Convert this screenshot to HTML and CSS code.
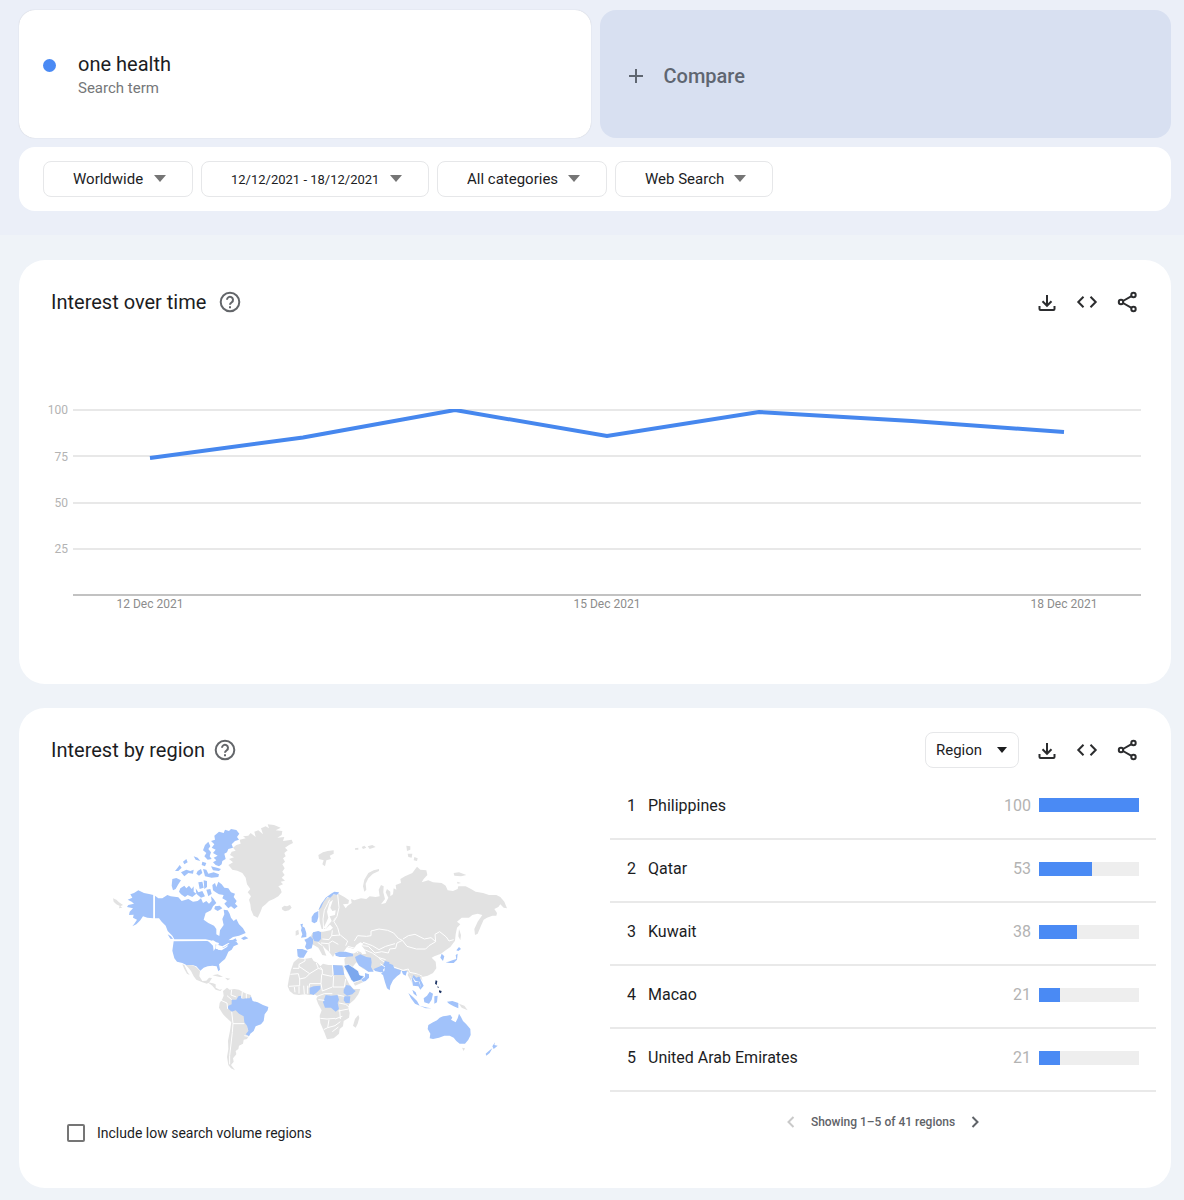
FILE: index.html
```html
<!DOCTYPE html>
<html lang="en">
<head>
<meta charset="utf-8">
<meta name="viewport" content="width=device-width, initial-scale=1">
<title>one health - Explore</title>
<link rel="stylesheet" href="styles.css">
</head>
<body>
<svg class="sprite" aria-hidden="true">
  <symbol id="i-help" viewBox="0 0 24 24"><circle cx="12" cy="12" r="9.300"/><path d="M9 9.800a3 3 0 1 1 4.800 2.400c-1.100.800-1.800 1.300-1.800 2.500"/><path d="M12 16.200v2"/></symbol>
  <symbol id="i-download" viewBox="0 0 24 24"><path d="M12 5v10.500M7.500 11.300 12 15.800l4.500-4.500M4.500 16v3a1 1 0 0 0 1 1h13a1 1 0 0 0 1-1v-3"/></symbol>
  <symbol id="i-code" viewBox="0 0 24 24"><path d="M8.500 6.800 3.300 12l5.200 5.200M15.500 6.800l5.200 5.200-5.200 5.200"/></symbol>
  <symbol id="i-share" viewBox="0 0 24 24"><circle cx="6" cy="12" r="2.200"/><circle cx="18.500" cy="5" r="2.200"/><circle cx="18.500" cy="19" r="2.200"/><path d="m8 11 8.500-4.900M8 13l8.500 4.900"/></symbol>
</svg>

<header class="top">
  <div class="terms">
    <section class="term">
      <span class="dot"></span>
      <div>
        <h1 class="term-name">one health</h1>
        <p class="term-kind">Search term</p>
      </div>
    </section>
    <button class="compare" type="button">
      <svg class="plus" viewBox="0 0 16 16" aria-hidden="true"><path d="M8 1v14M1 8h14"/></svg>
      Compare
    </button>
  </div>
  <form class="filters">
    <div class="drop drop-place"><select aria-label="Location"><option>Worldwide</option></select></div>
    <div class="drop drop-dates"><select aria-label="Time range"><option>12/12/2021 - 18/12/2021</option></select></div>
    <div class="drop drop-category"><select aria-label="Category"><option>All categories</option></select></div>
    <div class="drop drop-source"><select aria-label="Search type"><option>Web Search</option></select></div>
  </form>
</header>

<main class="cards">
  <section class="card">
    <div class="card-head">
      <h2 class="card-title">Interest over time</h2>
      <button class="help" type="button" aria-label="Help"><svg class="icon"><use href="#i-help"/></svg></button>
      <div class="actions">
        <button class="action" type="button" aria-label="Download"><svg class="icon"><use href="#i-download"/></svg></button>
        <button class="action" type="button" aria-label="Embed"><svg class="icon"><use href="#i-code"/></svg></button>
        <button class="action" type="button" aria-label="Share"><svg class="icon"><use href="#i-share"/></svg></button>
      </div>
    </div>
    <div class="chart">
      <svg viewBox="0 0 1094 220" role="img" aria-label="Interest over time, 12 to 18 December 2021">
        <clipPath id="plot"><path d="M25 9h1069v186H25z"/></clipPath>
        <path class="grid" d="M25 10h1068M25 56h1068M25 103h1068M25 149h1068"/>
        <path class="base" d="M25 195h1068"/>
        <g class="y-labels"><text x="20" y="14">100</text><text x="20" y="61">75</text><text x="20" y="107">50</text><text x="20" y="153">25</text></g>
        <g class="x-labels"><text x="102" y="208">12 Dec 2021</text><text x="559" y="208">15 Dec 2021</text><text x="1016" y="208">18 Dec 2021</text></g>
        <path class="line" clip-path="url(#plot)" d="M102 58 255 37.500 407 10 559 36 711 12 864 21 1016 32"/>
      </svg>
    </div>
  </section>

  <section class="card">
    <div class="card-head">
      <h2 class="card-title">Interest by region</h2>
      <button class="help help-near" type="button" aria-label="Help"><svg class="icon"><use href="#i-help"/></svg></button>
      <div class="actions">
        <div class="drop drop-region"><select aria-label="Resolution"><option>Region</option></select></div>
        <button class="action" type="button" aria-label="Download"><svg class="icon"><use href="#i-download"/></svg></button>
        <button class="action" type="button" aria-label="Embed"><svg class="icon"><use href="#i-code"/></svg></button>
        <button class="action" type="button" aria-label="Share"><svg class="icon"><use href="#i-share"/></svg></button>
      </div>
    </div>
    <div class="region-body">
      <div class="map-side">
        <svg class="map" viewBox="0 0 1260 810" role="img" aria-label="World map of interest by region">
          <!-- Greenland, Iceland, Aleutians -->
          <g class="land">
            <path d="M390 150 405 145 393 138 398 128 410 125 402 116 412 108 425 104 422 92 440 88 432 82 448 80 455 72 470 84 466 68 478 64 492 76 486 58 500 52 510 58 506 46 525 48 545 56 530 64 550 66 548 78 535 86 556 84 552 96 568 94 578 92 582 102 570 108 558 116 566 124 556 132 560 142 552 148 558 158 550 166 557 178 550 188 557 198 548 206 558 215 545 218 552 226 538 232 545 240 548 250 538 262 524 270 510 276 500 286 490 294 484 310 476 326 464 320 456 302 454 286 450 272 456 262 446 250 454 240 444 226 440 206 430 192 415 185 400 182 388 168 402 160Z"/>
            <path d="M548 296 556 290 564 292 573 288 578 296 570 304 558 307 550 302Z"/>
            <path d="M42 268 52 272 60 280 72 288 64 292 52 286 44 278Z M62 290 70 296 60 298Z"/>
          </g>
          <!-- North America -->
          <g class="hit">
            <path d="M163 258 150 255 135 252 118 244 105 252 94 256 100 266 86 272 98 278 105 284 88 288 84 294 102 298 92 308 90 318 104 317 102 326 114 332 106 344 100 352 112 346 124 334 132 322 145 326 163 328Z"/>
            <path d="M168 260 178 268 190 268 205 258 215 262 238 265 248 276 268 270 282 278 296 276 306 268 312 282 322 276 330 284 338 276 336 262 344 270 352 282 342 292 336 304 320 312 314 332 328 342 345 350 352 360 352 376 361 381 363 364 374 348 370 330 376 316 374 302 386 304 392 314 396 326 404 336 412 330 420 346 432 358 440 372 420 380 402 384 388 394 402 392 410 388 414 396 402 402 388 402 370 412 358 408 345 398 334 394 320 391 226 391 220 380 206 366 200 350 188 338 180 328 168 328Z"/>
            <path d="M220 210 232 207 246 214 238 226 230 240 222 244 218 230Z M244 238 256 230 262 238 270 230 278 240 284 232 284 248 292 254 280 264 266 258 258 264 246 256 240 248Z M346 80 360 68 374 72 378 62 390 66 396 60 412 63 421 74 414 84 420 92 408 96 398 106 402 116 388 120 384 130 376 134 380 150 370 156 368 166 360 172 350 168 342 160 352 154 344 146 356 140 342 132 350 122 338 116 346 106 336 96 348 92Z M318 108 328 98 334 112 328 120 336 130 332 142 338 150 326 152 316 142 322 132 312 124Z"/>
            <path d="M340 228 348 222 352 234 358 218 368 226 376 236 388 238 396 250 408 254 404 264 413 276 408 284 416 292 406 300 396 292 388 298 376 284 384 276 370 268 374 258 360 256 350 250 342 244Z M228 186 236 176 242 168 248 176 238 186Z M252 158 262 150 266 160 256 166Z M246 190 262 182 274 186 284 182 282 194 268 192 256 202Z M284 142 296 146 304 156 290 152Z M310 158 322 162 318 172 308 168Z M296 186 306 180 310 192 300 200 292 194Z M312 180 322 182 328 194 344 190 360 196 358 204 338 206 318 202Z M336 172 354 176 366 180 360 186 342 184Z M298 220 310 218 314 236 302 240Z M314 214 324 216 324 234 316 240Z M290 238 298 250 310 246 318 262 306 266 292 254Z M322 242 334 240 338 254 328 262Z M348 292 362 290 370 298 356 306 346 300Z M438 382 448 388 434 393 426 388Z M206 376 216 382 222 390 214 389Z"/>
            <g transform="translate(0 360)">
              <path d="M224 37 325 36 337 42 352 46 350 60 364 60 382 50 392 42 404 38 412 38 418 46 404 52 398 62 388 68 384 78 378 90 368 98 360 106 363 122 358 127 353 112 340 110 326 112 314 116 304 125 292 112 280 108 262 108 250 102 234 98 226 88 220 65Z"/>
            </g>
          </g>
          <g class="sea" transform="translate(0 360)">
            <path d="M330 38 342 34 352 40 360 42 358 48 350 46 350 56 344 66 342 50 336 44Z M356 50 364 58 374 56 388 48 384 54 368 64 356 62Z"/>
          </g>
          <!-- Latin America -->
          <g transform="translate(0 360)">
            <g class="land">
              <path d="M260 108 280 109 290 113 303 126 301 142 310 156 322 155 330 146 339 147 332 158 324 164 310 160 292 152 284 142 276 126 268 116Z M250 106 256 108 266 130 272 138 264 134 256 120Z M326 160 342 163 350 166 350 176 362 182 370 181 364 186 350 182 340 170Z M340 139 356 136 372 143 362 144Z M378 146 394 149 386 154Z"/>
              <path d="M372 186 384 176 392 182 406 180 420 182 430 188 442 194 456 198 456 210 448 240 446 300 452 316 444 330 434 332 432 344 420 350 418 360 410 366 412 376 402 388 404 398 396 408 408 424 396 418 388 408 384 384 388 360 387 335 393 305 397 280 384 268 372 256 360 236 362 222 370 210 374 200Z"/>
            </g>
            <path class="hit" d="M398 212 412 212 418 202 426 200 430 210 442 208 452 208 456 202 461 216 476 220 492 228 508 234 506 244 497 256 494 276 486 286 470 292 464 306 454 314 450 322 440 316 448 306 444 290 436 280 434 262 420 254 410 244 398 248 386 238 388 230 398 226Z"/>
            <path class="border" d="M384 200 398 212M366 214 384 222M384 222 386 240M398 248 402 284 436 284M402 284 400 310 396 345 392 380 392 406M398 182 396 198 412 204M430 188 428 208M442 194 442 208M436 320 448 322"/>
          </g>
          <!-- Europe and Asia -->
          <g transform="translate(540 60)">
            <path class="land" d="M120 240 132 218 146 206 160 198 178 194 196 204 210 214 208 224 192 226 200 238 206 230 218 222 216 210 226 214 246 208 262 210 272 202 290 204 302 202 299 182 306 168 314 172 313 190 318 210 306 226 320 222 328 206 320 190 324 180 334 188 334 202 342 196 344 178 352 182 350 168 366 162 364 150 378 142 400 132 414 113 424 122 442 124 445 138 434 150 428 160 448 154 462 160 488 162 500 170 506 184 522 186 536 180 538 172 560 172 576 180 590 188 612 192 630 198 652 198 664 204 676 218 684 238 674 236 664 226 658 234 646 240 654 252 652 260 640 260 624 266 614 272 606 290 596 314 588 318 586 300 596 278 610 258 596 254 580 258 570 266 548 266 534 278 544 286 534 296 530 316 528 335 514 354 500 364 486 374 476 378 466 382 458 386 470 398 472 418 462 432 446 440 430 444 420 450 412 460 400 452 388 430 376 424 350 430 322 405 290 422 270 428 250 418 232 400 216 420 198 410 196 390 206 378 228 372 236 366 246 370 250 376 262 374 256 360 248 350 254 344 244 340 232 348 224 360 204 354 194 368 170 370 162 384 150 368 138 358 130 348 142 380 130 378 118 356 100 346 92 330 100 312 116 308 132 308 154 304 162 296 152 286 166 272 172 262 150 290 140 300 128 300 122 278Z"/>
            <path class="sea" d="M144 248 152 220 162 212 154 236 160 246 170 244 168 258 152 262 158 276 148 288 140 300 134 296 142 280 148 266Z"/>
            <path class="land" d="M118 78 132 70 146 66 164 64 164 74 152 80 156 90 142 94 138 112 130 106 134 94 120 90Z M256 188 252 172 256 152 268 132 284 124 300 120 300 126 282 134 268 148 260 164 262 182Z M382 50 394 52 394 62 384 66Z M386 74 400 74 398 86 388 84Z M406 84 416 88 414 96 404 94Z M524 132 540 130 562 138 546 142 526 140Z M534 158 546 162 536 164Z M228 58 238 56 238 62 228 62Z M248 54 256 50 262 56 252 60Z M266 52 280 48 290 54 272 60Z M540 300 546 318 544 334 538 322Z M50 306 58 302 60 316 50 320Z"/>
            <path class="hit" d="M98 264 106 252 118 246 118 264 114 278 106 283 98 278Z M118 244 126 226 140 206 156 194 166 188 180 190 176 198 164 196 154 206 146 204 134 218 126 236Z M64 286 72 284 70 292 77 296 82 312 82 324 66 326 70 316 66 304 68 296Z M76 332 86 328 94 322 102 330 102 342 98 358 84 362 78 354 82 342Z M102 310 118 306 126 310 126 330 118 338 106 336 100 324Z M54 360 70 360 86 366 80 376 74 386 62 386 56 382Z"/>
            <path class="border" d="M134 304 132 270 136 244 146 224 152 212M176 196 180 236 174 262 166 276M130 330 150 332 158 320 160 304M158 320 184 318 206 336 200 350M126 342 148 344 160 336 178 346M150 344 152 368M164 276 176 296 182 318M116 340 130 350M226 336 236 320 262 322 276 320 276 306 300 300 326 304 344 312 358 328 370 334 354 342 350 358 332 360 328 372 308 368 288 372 268 352 250 350M252 340 280 350 300 362 320 352 348 344M256 362 280 372 300 386 320 392M372 330 388 320 408 316 436 330 456 326 470 338 450 350 440 360 412 360 384 352 370 334M470 338 468 316 482 308 502 324 510 336 524 332M300 388 322 404 344 414 372 424 388 420 392 430 412 434 430 442M206 352 228 358 236 372"/>
          </g>
          <g transform="translate(540 390)">
            <path class="hit" d="M168 42 182 38 200 38 222 44 222 52 200 54 182 54 170 50Z M228 54 244 46 262 54 276 56 278 70 276 84 284 98 268 98 254 88 240 80 232 66Z M284 90 298 84 312 78 318 66 332 70 322 82 312 92 314 100 304 100 288 96Z M318 82 328 72 342 78 346 88 366 94 364 104 354 112 342 124 334 140 332 154 324 148 318 130 312 108 306 104 316 96Z M368 96 384 96 380 110 372 106Z M488 44 496 52 492 66 484 56Z M500 70 508 68 520 64 532 60 530 48 536 44 534 62 524 72 510 72Z M532 34 540 24 546 30 538 36Z"/>
            <path class="border" d="M304 74 318 84"/>
            <path class="hit" d="M398 118 404 108 412 116 422 112 426 124 434 140 424 152 418 142 402 140Z M388 162 402 174 414 186 422 200 408 194 396 178Z M434 178 444 170 452 158 462 164 458 182 450 194 436 190Z M466 172 476 170 474 190 466 194Z M422 200 446 206 458 208 440 208Z M504 188 520 186 538 192 538 208 524 202 510 194Z M400 152 410 160 414 172 404 164Z"/>
            <path class="land" d="M390 100 396 118 402 146 398 130 386 108Z M540 194 556 200 566 214 548 206Z M414 104 424 110 432 126 426 120Z"/>
            <path class="sea" d="M398 112 408 130 420 128 426 148 422 128 410 126Z"/>
            <path class="hit" d="M448 258 462 250 474 244 482 236 492 232 504 230 514 228 520 236 516 242 530 250 536 238 540 224 546 234 552 246 562 256 574 270 575 288 568 302 558 314 542 314 532 306 524 296 512 290 496 290 480 296 462 300 452 298 454 284 446 270Z M648 310 646 318 656 320 644 330 640 322Z M640 328 632 342 622 350 620 344 632 334Z"/>
            <path class="land" d="M549 326 558 328 554 336Z"/>
            <path class="top-hit" d="M470 124 475 126 473 138 468 134Z M480 154 488 156 486 163 480 160Z M476 140 480 146 476 146Z"/>
            <!-- Africa -->
            <path class="land" d="M44 70 58 58 76 60 98 56 104 66 116 72 124 82 132 74 148 78 164 78 190 78 196 88 194 104 204 122 212 138 224 150 244 150 238 166 226 182 210 196 208 208 212 222 210 236 194 246 192 262 182 270 180 284 164 298 144 301 136 280 124 252 122 230 128 214 118 196 112 180 116 172 106 166 92 168 78 166 60 168 44 166 32 156 26 142 30 118 36 92Z M228 240 238 228 241 236 236 254 230 266 222 260Z"/>
            <path class="hit" d="M162 78 190 80 196 108 164 108Z M92 146 104 142 124 140 124 150 114 160 104 168 92 164Z M140 168 156 170 176 168 180 182 176 192 180 210 170 218 156 206 138 206 132 190Z M194 152 202 138 214 140 222 150 230 156 220 166 204 170 194 162Z M196 172 214 172 212 192 200 192 194 184Z"/>
            <path class="border" d="M42 88 60 88 60 76 78 66 78 60M60 82 92 104 118 88 112 72M92 104 80 116 62 120 62 140 30 142M34 106 58 104 62 120M118 88 130 92 130 106 158 112 162 106 160 78M124 84 130 92M128 106 126 134 92 134 90 146M164 110 162 144 196 144 200 120M126 134 130 156 160 144M114 172 136 164 160 164M118 182 136 184M176 168 196 172M180 192 200 196 210 204M124 238 144 240 168 238M150 242 146 266 134 272M168 240 190 232M146 266 168 260 184 248M160 278 178 264M178 216 208 210M60 142 60 164M74 140 76 166M86 140 86 164M46 144 48 160M182 212 184 240"/>
            <path class="land" d="M224 132 246 124 252 130 228 140Z"/>
            <path class="mid-hit" d="M194 80 208 76 224 86 238 96 242 108 256 112 244 124 224 130 216 122 208 106Z"/>
            <path class="hit" d="M258 102 270 106 270 116 260 126 252 128 246 122 258 114Z"/>
          </g>
          <path class="border" d="M165 256v74"/>
        </svg>
        <label class="low-volume"><input type="checkbox">Include low search volume regions</label>
      </div>
      <div class="list-side">
        <table class="ranking">
          <tbody>
            <tr><td class="rank">1</td><th scope="row">Philippines</th><td class="value">100</td><td class="bar-cell"><div class="bar"><div class="fill" style="width:100%"></div></div></td></tr>
            <tr><td class="rank">2</td><th scope="row">Qatar</th><td class="value">53</td><td class="bar-cell"><div class="bar"><div class="fill" style="width:53%"></div></div></td></tr>
            <tr><td class="rank">3</td><th scope="row">Kuwait</th><td class="value">38</td><td class="bar-cell"><div class="bar"><div class="fill" style="width:38%"></div></div></td></tr>
            <tr><td class="rank">4</td><th scope="row">Macao</th><td class="value">21</td><td class="bar-cell"><div class="bar"><div class="fill" style="width:21%"></div></div></td></tr>
            <tr><td class="rank">5</td><th scope="row">United Arab Emirates</th><td class="value">21</td><td class="bar-cell"><div class="bar"><div class="fill" style="width:21%"></div></div></td></tr>
          </tbody>
        </table>
        <nav class="pager" aria-label="Regions">
          <button type="button" aria-label="Previous" disabled><svg viewBox="0 0 8 12"><path d="M6.500 1 1.500 6l5 5"/></svg></button>
          <span>Showing 1–5 of 41 regions</span>
          <button type="button" aria-label="Next"><svg viewBox="0 0 8 12"><path d="m1.500 1 5 5-5 5"/></svg></button>
        </nav>
      </div>
    </div>
  </section>
</main>
</body>
</html>
```
FILE: styles.css
```css
* {
  box-sizing: border-box;
}

body {
  margin: 0;
  background: #eff3f8;
  color: #1c1d1f;
  font-family: Roboto, "Liberation Sans", sans-serif;
  font-size: 16px;
}

h1,
h2,
p {
  margin: 0;
  font-weight: 400;
}

button,
select,
input {
  margin: 0;
  font: inherit;
  color: inherit;
}

button {
  padding: 0;
  border: 0;
  background: none;
  cursor: pointer;
}

.sprite {
  display: none;
}

/* Search terms and filters */
.top {
  display: grid;
  gap: 9px;
  padding: 10px 13px 24px 19px;
  background: #ebeff8;
}

.terms {
  display: grid;
  grid-template-columns: 1fr 1fr;
  gap: 9px;
}

.term,
.compare {
  display: flex;
  align-items: center;
  min-height: 128px;
  border-radius: 16px;
}

.term {
  gap: 22px;
  padding: 4px 24px 0;
  background: #fff;
  box-shadow: 0 0 1px #b8bcc6;
}

.dot {
  width: 13px;
  height: 13px;
  margin-bottom: 22px;
  border-radius: 50%;
  background: #4a8af4;
}

.term-name {
  font-size: 20px;
  line-height: 24px;
}

.term-kind {
  color: #757779;
  font-size: 15px;
  line-height: 24px;
}

.compare {
  gap: 20px;
  padding: 4px 28px 0;
  background: #d8e0f1;
  color: #5f6671;
  font-size: 20px;
  font-weight: 500;
}

.plus {
  width: 16px;
  height: 16px;
  fill: none;
  stroke: #5f6671;
  stroke-width: 2;
}

.filters {
  display: flex;
  flex-wrap: wrap;
  gap: 8px;
  padding: 14px 24px;
  border-radius: 16px;
  background: #fff;
}

.drop {
  position: relative;
  height: 36px;
}

.drop select {
  width: 100%;
  height: 100%;
  padding: 0 24px 0 29px;
  border: 1px solid #e6e7e9;
  border-radius: 8px;
  appearance: none;
  background: #fff;
  font-size: 15px;
}

.drop::after {
  content: "";
  position: absolute;
  top: 14px;
  right: 27px;
  border: solid transparent;
  border-width: 7px 6px 0;
  border-top-color: #757575;
  pointer-events: none;
}

.drop-place {
  width: 150px;
}

.drop-dates {
  width: 228px;
}

.drop-dates select {
  font-size: 13px;
}

.drop-category {
  width: 170px;
}

.drop-source {
  width: 158px;
}

.drop-region {
  width: 94px;
  margin-right: 8px;
}

.drop-region select {
  padding: 0 10px;
}

.drop-region::after {
  top: 15px;
  right: 12px;
  border-width: 6px 5px 0;
  border-top-color: #1c1d1f;
}

/* Cards */
.cards {
  display: grid;
  gap: 24px;
  padding: 25px 13px 12px 19px;
}

.card {
  border-radius: 26px;
  background: #fff;
}

.card-head {
  display: flex;
  align-items: center;
  padding: 24px 24px 8px 32px;
}

.card-title {
  font-size: 20px;
  line-height: 24px;
}

.icon {
  display: block;
  width: 24px;
  height: 24px;
  fill: none;
  stroke: currentColor;
  stroke-width: 2;
}

.help {
  margin-left: 12px;
  color: #63666a;
}

.help-near {
  margin-left: 8px;
}

.actions {
  display: flex;
  align-items: center;
  margin-left: auto;
}

.action {
  display: grid;
  place-items: center;
  width: 40px;
  height: 36px;
  color: #2b2c2e;
}

/* Line chart */
.chart {
  padding: 72px 29px 64px;
}

.chart svg {
  display: block;
  width: 100%;
  fill: none;
}

.grid {
  stroke: #e8e8e8;
  stroke-width: 2;
}

.base {
  stroke: #c2c2c2;
  stroke-width: 2;
}

.line {
  stroke: #4687ee;
  stroke-width: 4;
}

.chart text {
  font-size: 12px;
}

.y-labels {
  fill: #b3b3b3;
  text-anchor: end;
}

.x-labels {
  fill: #8c8c8c;
  text-anchor: middle;
}

/* Map */
.region-body {
  display: grid;
  grid-template-columns: 591fr 546fr;
  padding: 0 15px 45px 0;
}

.map-side {
  display: flex;
  flex-direction: column;
  padding: 33px 0 0 48px;
}

.map {
  display: block;
  width: 78%;
  max-width: 420px;
  margin-left: 32px;
}

.land {
  fill: #e2e2e2;
}

.hit {
  fill: #a1c2fa;
}

.mid-hit {
  fill: #7ca8ee;
  stroke: #fff;
  stroke-width: 2;
}

.top-hit {
  fill: #1d3565;
}

.sea {
  fill: #fff;
}

.border {
  fill: none;
  stroke: #fff;
  stroke-width: 3;
}

.low-volume {
  display: flex;
  align-items: center;
  gap: 12px;
  margin-top: 44px;
  font-size: 14px;
  line-height: 20px;
}

.low-volume input {
  width: 18px;
  height: 18px;
  border: 2px solid #757575;
  border-radius: 2px;
  appearance: none;
}

/* Ranking */
.ranking {
  width: 100%;
  border-collapse: collapse;
}

.ranking tr {
  height: 63px;
  border-bottom: 2px solid #e9e9e9;
}

.ranking td,
.ranking th {
  padding: 0 0 4px;
  font-weight: 400;
  text-align: left;
}

.ranking .rank {
  width: 38px;
  padding-left: 17px;
}

.ranking .value {
  width: 48px;
  padding-right: 8px;
  color: #b3b3b3;
  text-align: right;
}

.ranking .bar-cell {
  width: 117px;
  padding-right: 17px;
}

.bar {
  height: 14px;
  background: #eee;
}

.fill {
  height: 14px;
  background: #4a8af4;
}

.pager {
  display: flex;
  justify-content: center;
  align-items: center;
  gap: 16px;
  margin-top: 20px;
  color: #5f6368;
  font-size: 12px;
  font-weight: 500;
  line-height: 20px;
}

.pager svg {
  display: block;
  width: 8px;
  height: 12px;
  fill: none;
  stroke: currentColor;
  stroke-width: 2;
}

.pager button:disabled {
  color: #c9c9c9;
}
```
